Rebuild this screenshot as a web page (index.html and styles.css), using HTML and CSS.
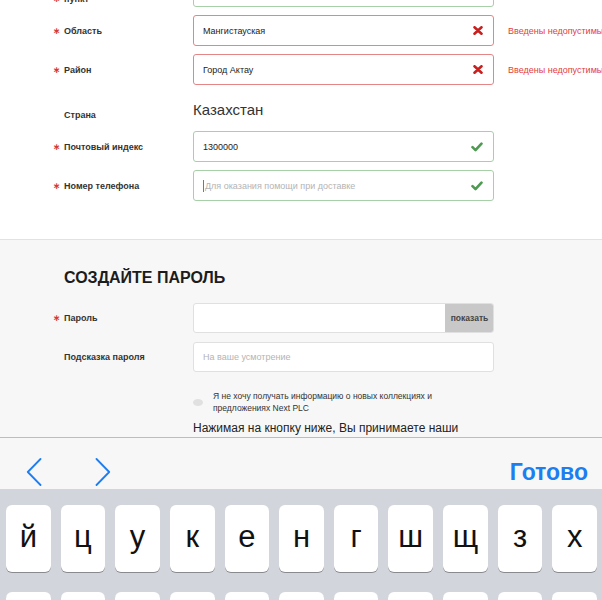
FILE: index.html
```html
<!DOCTYPE html>
<html lang="ru">
<head>
<meta charset="utf-8">
<title>Регистрация</title>
<link rel="stylesheet" href="styles.css">
</head>
<body>
<div class="page">
  <div class="scroll">
    <section class="address">
      <div class="row">
        <div class="label two"><span class="req">∗</span><span>Населенный<br>пункт</span></div>
        <div class="field ok"><span class="val">Актау</span><svg class="ico" width="12" height="10" viewBox="0 0 12 10"><polyline points="1.5,5.2 4.5,8.2 10.5,1.6" fill="none" stroke="#4f9a52" stroke-width="2.6" stroke-linecap="round" stroke-linejoin="round"/></svg></div>
      </div>
      <div class="row">
        <div class="label"><span class="req">∗</span><span>Область</span></div>
        <div class="field err"><span class="val">Мангистауская</span><svg class="ico" width="10" height="9" viewBox="0 0 10 9"><path d="M1.5 1.3 L8.5 7.7 M8.5 1.3 L1.5 7.7" stroke="#c8201f" stroke-width="2.6" stroke-linecap="round"/></svg></div>
        <div class="error">Введены недопустимые символы</div>
      </div>
      <div class="row">
        <div class="label"><span class="req">∗</span><span>Район</span></div>
        <div class="field err"><span class="val">Город Актау</span><svg class="ico" width="10" height="9" viewBox="0 0 10 9"><path d="M1.5 1.3 L8.5 7.7 M8.5 1.3 L1.5 7.7" stroke="#c8201f" stroke-width="2.6" stroke-linecap="round"/></svg></div>
        <div class="error">Введены недопустимые символы</div>
      </div>
      <div class="row country">
        <div class="label"><span class="req"></span><span>Страна</span></div>
        <div class="country-val">Казахстан</div>
      </div>
      <div class="row">
        <div class="label"><span class="req">∗</span><span>Почтовый индекс</span></div>
        <div class="field ok"><span class="val">1300000</span><svg class="ico" width="12" height="10" viewBox="0 0 12 10"><polyline points="1.5,5.2 4.5,8.2 10.5,1.6" fill="none" stroke="#4f9a52" stroke-width="2.6" stroke-linecap="round" stroke-linejoin="round"/></svg></div>
      </div>
      <div class="row">
        <div class="label"><span class="req">∗</span><span>Номер телефона</span></div>
        <div class="field ok"><span class="caret"></span><span class="val ph">Для оказания помощи при доставке</span><svg class="ico" width="12" height="10" viewBox="0 0 12 10"><polyline points="1.5,5.2 4.5,8.2 10.5,1.6" fill="none" stroke="#4f9a52" stroke-width="2.6" stroke-linecap="round" stroke-linejoin="round"/></svg></div>
      </div>
    </section>
    <section class="password">
      <h2 class="heading">СОЗДАЙТЕ ПАРОЛЬ</h2>
      <div class="pw-rows">
        <div class="row pw">
          <div class="label"><span class="req">∗</span><span>Пароль</span></div>
          <div class="field plain btn-field"><span class="val"></span><span class="show">показать</span></div>
        </div>
        <div class="row pw">
          <div class="label"><span class="req"></span><span>Подсказка пароля</span></div>
          <div class="field plain"><span class="val ph">На ваше усмотрение</span></div>
        </div>
      </div>
      <div class="optout">
        <span class="check"></span>
        <span class="optout-text">Я не хочу получать информацию о новых коллекциях и<br>предложениях Next PLC</span>
      </div>
      <p class="terms">Нажимая на кнопку ниже, Вы принимаете наши</p>
    </section>
  </div>
</div>
<div class="toolbar">
  <svg class="arrow first" width="16" height="28" viewBox="0 0 16 28"><polyline points="14.5,1 1.8,14 14.5,27" fill="none" stroke="#1e7ef0" stroke-width="1.8" stroke-linecap="round" stroke-linejoin="round"/></svg>
  <svg class="arrow second" width="16" height="28" viewBox="0 0 16 28"><polyline points="1.5,1 14.2,14 1.5,27" fill="none" stroke="#1e7ef0" stroke-width="1.8" stroke-linecap="round" stroke-linejoin="round"/></svg>
  <span class="done">Готово</span>
</div>
<div class="keyboard">
  <div class="krow">
    <span class="key">й</span><span class="key">ц</span><span class="key">у</span><span class="key">к</span><span class="key">е</span><span class="key">н</span><span class="key">г</span><span class="key">ш</span><span class="key">щ</span><span class="key">з</span><span class="key">х</span>
  </div>
  <div class="krow">
    <span class="key">ф</span><span class="key">ы</span><span class="key">в</span><span class="key">а</span><span class="key">п</span><span class="key">р</span><span class="key">о</span><span class="key">л</span><span class="key">д</span><span class="key">ж</span><span class="key">э</span>
  </div>
</div>
</body>
</html>
```

FILE: styles.css
```css
* { box-sizing: border-box; }

body {
  margin: 0;
  width: 602px;
  height: 600px;
  overflow: hidden;
  background: #fff;
  font-family: "Liberation Sans", Arial, sans-serif;
  color: #333;
}

.page {
  height: 437px;
  overflow: hidden;
}

.scroll {
  margin-top: -24px;
}

.address {
  background: #fff;
  display: flex;
  flex-direction: column;
  gap: 8px;
  padding-bottom: 38px;
  border-bottom: 1px solid #e2e2e2;
}

.row {
  display: flex;
  align-items: center;
  height: 31px;
}

.label {
  width: 193px;
  flex: none;
  padding-left: 53px;
  display: flex;
  align-items: center;
  font-size: 9px;
  font-weight: bold;
  color: #333;
  line-height: 12px;
}

.label.two {
  align-items: flex-end;
  align-self: flex-end;
  margin-bottom: 2px;
}

.req {
  width: 11px;
  flex: none;
  color: #d33a35;
  font-family: "DejaVu Sans", sans-serif;
  font-size: 9px;
  font-weight: bold;
}

.field {
  width: 301px;
  height: 31px;
  flex: none;
  border: 1px solid #e0e0e0;
  border-radius: 3px;
  background: #fff;
  display: flex;
  align-items: center;
  padding: 0 10px 0 9px;
  font-size: 9px;
  color: #222;
}

.field.ok { border-color: #a8d0a8; }
.field.err { border-color: #e48686; }

.val { flex: 1; white-space: nowrap; }
.ph { color: #b4b4b4; }

.caret {
  width: 1px;
  height: 12px;
  background: #3b7ff0;
  margin-right: 1px;
}

.ico { flex: none; }

.error {
  margin-left: 14px;
  font-size: 9px;
  color: #e4403c;
  white-space: nowrap;
}

.row.country {
  height: 30px;
  align-items: baseline;
  padding-top: 8px;
}

.country-val {
  font-size: 15px;
  line-height: 18px;
  color: #333;
}

.password {
  background: #f7f7f7;
  padding-top: 28px;
  padding-bottom: 40px;
}

.heading {
  margin: 0 0 15px 64px;
  font-size: 16px;
  line-height: 20px;
  font-weight: bold;
  color: #1c1c1c;
}

.pw-rows {
  display: flex;
  flex-direction: column;
  gap: 9px;
}

.row.pw { height: 30px; }
.row.pw .field { height: 30px; }

.btn-field {
  padding-right: 0;
  overflow: hidden;
}

.show {
  width: 49px;
  height: 30px;
  margin: -1px -1px -1px 0;
  background: #c8c8c8;
  display: flex;
  align-items: center;
  justify-content: center;
  font-weight: bold;
  font-size: 8.5px;
  color: #444;
  border-radius: 0 3px 3px 0;
}

.optout {
  margin-top: 19px;
  padding-left: 193px;
  display: flex;
  align-items: center;
}

.check {
  width: 10px;
  height: 7px;
  border-radius: 50%;
  background: #e0e0e0;
  flex: none;
}

.optout-text {
  margin-left: 10px;
  font-size: 8.5px;
  line-height: 11.5px;
  color: #333;
}

.terms {
  margin: 7px 0 0 193px;
  font-size: 12px;
  line-height: 14px;
  color: #222;
}

.toolbar {
  height: 52px;
  border-top: 1px solid #bdbdbd;
  background: #f7f7f8;
  display: flex;
  align-items: center;
  padding-top: 17px;
}

.arrow.first { margin-left: 26px; }
.arrow.second { margin-left: 53px; }

.done {
  margin-left: auto;
  margin-right: 14px;
  font-size: 23px;
  font-weight: bold;
  color: #1e7ef0;
}

.keyboard {
  height: 111px;
  background: #d2d5db;
  padding: 16px 5px 0 6px;
  display: flex;
  flex-direction: column;
  gap: 20px;
}

.krow {
  display: flex;
  gap: 10px;
}

.key {
  flex: 1;
  height: 67px;
  background: #fff;
  border-radius: 6px;
  box-shadow: 0 1px 0 #898a8e;
  display: flex;
  align-items: center;
  justify-content: center;
  font-size: 31px;
  color: #111;
  padding-bottom: 3px;
}
```
